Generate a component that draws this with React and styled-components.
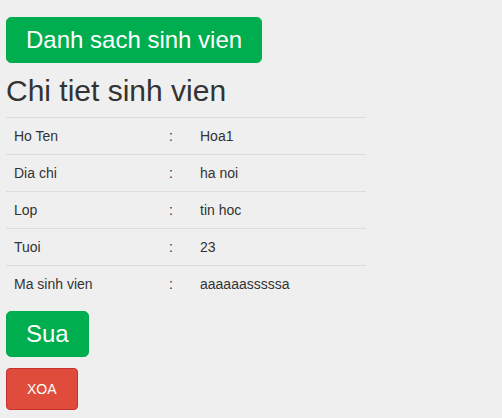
import React from "react";
import styled, { createGlobalStyle } from "styled-components";

const GlobalStyle = createGlobalStyle`
    body{
        margin:0;
        background-color:#efefef;
        font-family:"Liberation Sans", Arial, sans-serif;
        color:#333;
    }
`;

const student = [
    { label: "Ho Ten", value: "Hoa1" },
    { label: "Dia chi", value: "ha noi" },
    { label: "Lop", value: "tin hoc" },
    { label: "Tuoi", value: "23" },
    { label: "Ma sinh vien", value: "aaaaaasssssa" },
];

export default function App(){
    return (
        <>
            <GlobalStyle />
            <Container>
                <BigButton>Danh sach sinh vien</BigButton>
                <Heading>Chi tiet sinh vien</Heading>
                <Table>
                    <tbody>
                        {student.map((row) => (
                            <Row key={row.label}>
                                <LabelCell>{row.label}</LabelCell>
                                <ColonCell>:</ColonCell>
                                <ValueCell>{row.value}</ValueCell>
                            </Row>
                        ))}
                    </tbody>
                </Table>
                <BigButton>Sua</BigButton>
                <DeleteButton>XOA</DeleteButton>
            </Container>
        </>
    )
}

const Container = styled.div`
    padding:17px 6px 8px 6px;
    display:flex;
    flex-direction:column;
    align-items:flex-start;
`;

const BigButton = styled.button`
    background-color:#00ae4f;
    color:white;
    font-family:"Liberation Sans", Arial, sans-serif;
    font-size:24px;
    line-height:24px;
    padding:10px 19px;
    border:1px solid #00ae4f;
    border-radius:5px;
    cursor:pointer;
`;

const DeleteButton = styled.button`
    background-color:#e04c3b;
    color:white;
    font-family:"Liberation Sans", Arial, sans-serif;
    font-size:14px;
    line-height:20px;
    padding:10px 20px;
    border:1px solid #c9302c;
    border-radius:4px;
    margin-top:11px;
    cursor:pointer;
`;

const Heading = styled.h2`
    font-size:30px;
    font-weight:400;
    line-height:33px;
    margin:11px 0 10px 0;
    color:#333;
`;

const Table = styled.table`
    width:360px;
    border-collapse:collapse;
    margin-bottom:9px;
    font-size:14px;
    line-height:20px;
`;

const Row = styled.tr`
    border-top:1px solid #dcdcdc;
`;

const LabelCell = styled.td`
    width:139px;
    padding:8px;
`;

const ColonCell = styled.td`
    width:15px;
    padding:8px;
`;

const ValueCell = styled.td`
    padding:8px;
`;
